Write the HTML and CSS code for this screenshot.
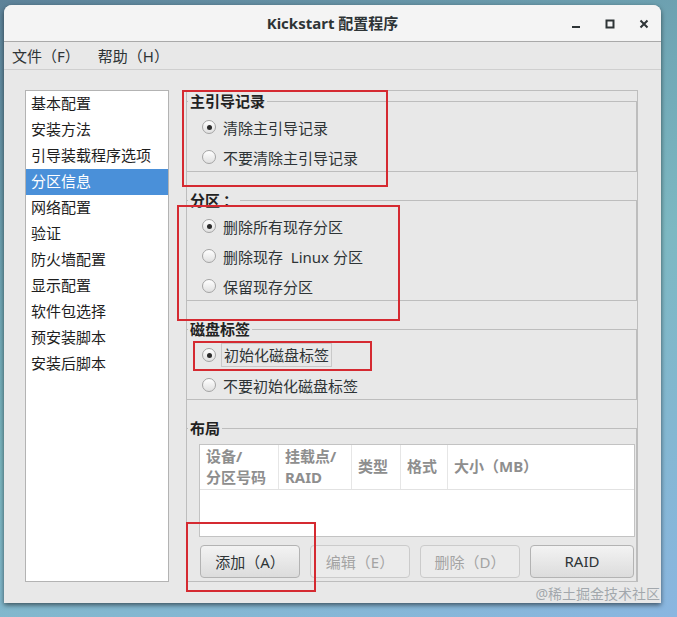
FILE: index.html
```html
<!DOCTYPE html>
<html lang="zh">
<head>
<meta charset="utf-8">
<title>Kickstart 配置程序</title>
<link rel="stylesheet" href="styles.css">
</head>
<body>
<div class="window">
  <div class="titlebar">
    <div></div>
    <div class="title">Kickstart 配置程序</div>
    <div class="controls">
      <span class="ctl"><svg width="10" height="10" viewBox="0 0 10 10"><rect x="1" y="7" width="8" height="2" fill="#2e3436"/></svg></span>
      <span class="ctl"><svg width="10" height="10" viewBox="0 0 10 10"><rect x="1.5" y="1.5" width="7" height="7" fill="none" stroke="#2e3436" stroke-width="2"/></svg></span>
      <span class="ctl"><svg width="10" height="10" viewBox="0 0 10 10"><path d="M1.5 1.5 L8.5 8.5 M8.5 1.5 L1.5 8.5" stroke="#2e3436" stroke-width="2"/></svg></span>
    </div>
  </div>
  <div class="menubar">
    <span class="menu">文件（F）</span>
    <span class="menu">帮助（H）</span>
  </div>
  <div class="content">
    <ul class="sidelist">
      <li>基本配置</li>
      <li>安装方法</li>
      <li>引导装载程序选项</li>
      <li class="selected">分区信息</li>
      <li>网络配置</li>
      <li>验证</li>
      <li>防火墙配置</li>
      <li>显示配置</li>
      <li>软件包选择</li>
      <li>预安装脚本</li>
      <li>安装后脚本</li>
    </ul>
    <div class="panel">
      <fieldset class="frame first">
        <legend>主引导记录</legend>
        <div class="radio"><span class="dot checked"></span><span class="rlabel">清除主引导记录</span></div>
        <div class="radio"><span class="dot"></span><span class="rlabel">不要清除主引导记录</span></div>
      </fieldset>
      <fieldset class="frame">
        <legend>分区<span class="colon">：</span></legend>
        <div class="radio"><span class="dot checked"></span><span class="rlabel">删除所有现存分区</span></div>
        <div class="radio"><span class="dot"></span><span class="rlabel">删除现存&nbsp; Linux 分区</span></div>
        <div class="radio"><span class="dot"></span><span class="rlabel">保留现存分区</span></div>
      </fieldset>
      <fieldset class="frame">
        <legend>磁盘标签</legend>
        <div class="radio"><span class="dot checked"></span><span class="rlabel focused">初始化磁盘标签</span></div>
        <div class="radio"><span class="dot"></span><span class="rlabel">不要初始化磁盘标签</span></div>
      </fieldset>
      <fieldset class="frame last">
        <legend>布局</legend>
        <div class="table">
          <div class="thead">
            <div class="th">设备/<br>分区号码</div>
            <div class="th">挂载点/<br>RAID</div>
            <div class="th">类型</div>
            <div class="th">格式</div>
            <div class="th">大小（MB）</div>
          </div>
          <div class="tbody"></div>
        </div>
        <div class="buttons">
          <button class="btn">添加（A）</button>
          <button class="btn disabled">编辑（E）</button>
          <button class="btn disabled">删除（D）</button>
          <button class="btn">RAID</button>
        </div>
      </fieldset>
    </div>
  </div>
</div>
<div class="mark m1"></div>
<div class="mark m2"></div>
<div class="mark m3"></div>
<div class="mark m4"></div>
<div class="watermark">@稀土掘金技术社区</div>
</body>
</html>
```

FILE: styles.css
```css
* { box-sizing: border-box; }
html, body { margin: 0; padding: 0; }
body {
  width: 677px;
  height: 617px;
  overflow: hidden;
  position: relative;
  padding: 5px 0 0 4px;
  font-family: "Noto Sans", "Noto Sans CJK SC", sans-serif;
  color: #2e3436;
  background: linear-gradient(160deg, #5d8299 0%, #71a8b6 35%, #7db8c2 55%, #8ab6e0 100%);
}
.window {
  width: 657px;
  height: 598px;
  background: #e8e8e8;
  border-radius: 8px 8px 0 0;
  box-shadow: 0 2px 5px rgba(0,0,0,0.55);
  display: flex;
  flex-direction: column;
  overflow: hidden;
}
.titlebar {
  height: 37px;
  flex: none;
  background: #f4f4f4;
  border-bottom: 1px solid #a9a9a9;
  display: grid;
  grid-template-columns: 1fr auto 1fr;
  align-items: center;
}
.title {
  font-weight: bold;
  font-size: 15px;
  color: #2e3436;
  padding-bottom: 1px;
}
.controls {
  display: flex;
  justify-content: flex-end;
  align-items: center;
  padding-top: 2px;
}
.ctl {
  width: 34px;
  height: 20px;
  display: flex;
  align-items: center;
  justify-content: center;
}
.menubar {
  height: 28px;
  flex: none;
  border-bottom: 1px solid #cfcfcf;
  display: flex;
  align-items: center;
  padding-left: 8px;
  padding-bottom: 1px;
  font-size: 15px;
  color: #2e3436;
}
.menu { margin-right: 18px; }
.content {
  flex: 1;
  display: flex;
  gap: 17px;
  padding: 20px 23px 21px 21px;
}
.sidelist {
  list-style: none;
  margin: 0;
  padding: 0;
  width: 144px;
  flex: none;
  background: #fff;
  border: 1px solid #b3b3b3;
  font-size: 15px;
  color: #1e1e1e;
}
.sidelist li {
  height: 26px;
  line-height: 24px;
  padding-left: 5px;
  padding-bottom: 2px;
  white-space: nowrap;
}
.sidelist li.selected {
  background: #4a90d9;
  color: #fff;
}
.panel {
  flex: 1;
  border: 1px solid #bdbdbd;
  display: flex;
  flex-direction: column;
}
.frame {
  margin: 19px 0 0 0;
  border: 1px solid #bdbdbd;
  border-left: none;
  padding: 5px 0 0 15px;
  min-width: 0;
  display: flex;
  flex-direction: column;
  gap: 4px;
}
.frame.first { margin-top: 1px; }
.frame.last {
  flex: 1;
  border-bottom: none;
  padding: 7px 1px 2px 12px;
  gap: 0;
}
.frame legend {
  font-weight: bold;
  font-size: 15px;
  line-height: 18px;
  padding: 0 2px;
  margin-left: -14px;
  color: #222;
}
.frame legend .colon {
  font-family: "Noto Sans CJK SC", sans-serif;
  margin-left: 3px;
}
.frame.last legend { margin-left: -11px; }
.radio {
  height: 26px;
  display: flex;
  align-items: center;
  padding-bottom: 2px;
  font-size: 15px;
  color: #2e3436;
}
.dot {
  width: 14px;
  height: 14px;
  border-radius: 50%;
  border: 1px solid #a4a4a4;
  background: linear-gradient(#ffffff, #e0e0e0);
  margin-right: 7px;
  flex: none;
  position: relative;
}
.dot.checked::after {
  content: "";
  position: absolute;
  left: 3.5px;
  top: 3.5px;
  width: 5px;
  height: 5px;
  border-radius: 50%;
  background: #2b2b2b;
}
.rlabel.focused {
  border: 1px solid #c9c9c9;
  padding: 0 2px;
  margin-left: -2px;
  height: 24px;
  line-height: 22px;
}
.table {
  background: #fff;
  border: 1px solid #c3c3c3;
  height: 93px;
  display: flex;
  flex-direction: column;
}
.thead {
  height: 45px;
  display: grid;
  grid-template-columns: 79px 73px 49px 47px 1fr;
  border-bottom: 1px solid #e2e2e2;
}
.th {
  display: flex;
  align-items: center;
  padding-left: 6px;
  padding-bottom: 1px;
  font-size: 15px;
  line-height: 21px;
  font-weight: bold;
  color: #8e8e8e;
  border-right: 1px solid #e6e6e6;
}
.th:last-child { border-right: none; }
.tbody { flex: 1; }
.buttons {
  display: flex;
  gap: 10px;
  margin-top: 8px;
  padding: 0 1px;
}
.btn {
  flex: 1;
  height: 33px;
  border: 1px solid #b3b3b3;
  border-radius: 4px;
  background: linear-gradient(#f3f3f3, #dcdcdc);
  font-family: "Noto Sans", "Noto Sans CJK SC", sans-serif;
  font-size: 15px;
  color: #2e3436;
  padding: 0 0 1px 0;
}
.btn:last-child { flex: 1.04; }
.btn.disabled {
  background: #ebebeb;
  border-color: #cbcbcb;
  color: #a3a3a3;
}
.mark {
  position: absolute;
  border: 2px solid #d52a31;
}
.m1 { left: 182px; top: 90px; width: 206px; height: 97px; }
.m2 { left: 177px; top: 205px; width: 223px; height: 116px; }
.m3 { left: 193px; top: 341px; width: 179px; height: 30px; }
.m4 { left: 186px; top: 522px; width: 130px; height: 70px; }
.watermark {
  position: absolute;
  right: 17px;
  top: 583px;
  font-size: 14px;
  color: rgba(150,156,162,0.85);
}
```
